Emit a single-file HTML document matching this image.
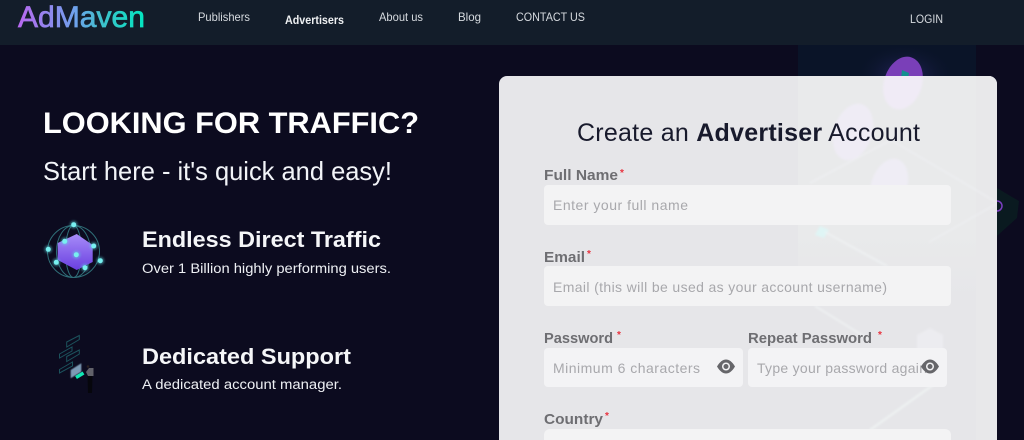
<!DOCTYPE html>
<html><head><meta charset="utf-8"><style>
html,body{margin:0;padding:0;width:1024px;height:440px;overflow:hidden;background:#0c0b1f}
svg{display:block;width:1024px;height:440px;overflow:hidden}
text{font-family:"Liberation Sans",sans-serif}
.nav{font-size:12px;fill:#d6dadf}
.lab{font-size:15px;font-weight:bold;fill:#6e6e72}
.ph{font-size:14px;fill:#a8a8ac}
.st{font-size:10px;fill:#e8333f;font-weight:bold}
</style></head><body>
<svg width="1024" height="440" viewBox="0 0 1024 440" xmlns="http://www.w3.org/2000/svg">
<defs>
<linearGradient id="lg" x1="18" x2="146" y1="0" y2="0" gradientUnits="userSpaceOnUse">
<stop offset="0" stop-color="#b868f0"/><stop offset=".45" stop-color="#6ea2ec"/><stop offset=".65" stop-color="#3fc0cc"/><stop offset="1" stop-color="#00e8c0"/></linearGradient>
<linearGradient id="cube" x1="0" x2="0" y1="0" y2="1"><stop offset="0" stop-color="#a78cf8"/><stop offset="1" stop-color="#6a3fe0"/></linearGradient>
<linearGradient id="fade" x1="0" x2="0" y1="0" y2="1"><stop offset="0" stop-color="#e9eaeb"/><stop offset=".7" stop-color="#e9eaeb"/><stop offset="1" stop-color="#e9eaeb" stop-opacity="0"/></linearGradient>
<filter id="b1"><feGaussianBlur stdDeviation="1"/></filter>
<filter id="b0"><feGaussianBlur stdDeviation=".6"/></filter>
<radialGradient id="glow"><stop offset="0" stop-color="#25255f"/><stop offset="1" stop-color="#0a1428" stop-opacity="0"/></radialGradient>
<clipPath id="cardclip"><path d="M507 76H989a8 8 0 0 1 8 8V440H499V84a8 8 0 0 1 8-8z"/></clipPath>
</defs>
<rect width="1024" height="440" fill="#0c0b1f"/>
<rect x="798" y="45" width="178" height="40" fill="#0a1428"/>
<ellipse cx="905" cy="75" rx="50" ry="32" fill="url(#glow)"/>
<ellipse cx="903" cy="83" rx="19" ry="27" transform="rotate(18 903 83)" fill="#7a3fb8"/>
<path d="M902 70l7 3-1 6h-7z" fill="#128f8f"/>
<path d="M997 188l22 13-2 17-20 18z" fill="#0a1a20"/>
<path d="M997 201a5 5 0 0 1 0 10" fill="none" stroke="#7a3fc0" stroke-width="1.5"/>

<rect width="1024" height="45" fill="#131d2a"/>
<text x="18" y="27" font-size="30" fill="url(#lg)" stroke="url(#lg)" stroke-width=".7" textLength="127" lengthAdjust="spacingAndGlyphs">AdMaven</text>
<text class="nav" x="198" y="21" textLength="52" lengthAdjust="spacingAndGlyphs">Publishers</text>
<text class="nav" x="285" y="24" textLength="59" lengthAdjust="spacingAndGlyphs" style="font-weight:bold;fill:#eef0f2">Advertisers</text>
<text class="nav" x="379" y="21" textLength="44" lengthAdjust="spacingAndGlyphs">About us</text>
<text class="nav" x="458" y="21" textLength="23" lengthAdjust="spacingAndGlyphs">Blog</text>
<text class="nav" x="516" y="21" textLength="69" lengthAdjust="spacingAndGlyphs">CONTACT US</text>
<text class="nav" x="910" y="23" textLength="33" lengthAdjust="spacingAndGlyphs">LOGIN</text>

<text x="43" y="133" font-size="30" font-weight="bold" fill="#fff" textLength="376" lengthAdjust="spacingAndGlyphs">LOOKING FOR TRAFFIC?</text>
<text x="43" y="180" font-size="26" fill="#f2f4f8" textLength="349" lengthAdjust="spacingAndGlyphs">Start here - it's quick and easy!</text>

<g fill="none" stroke="#2f6f78" stroke-width="1">
<circle cx="73.500" cy="251.500" r="26"/>
<ellipse cx="73.500" cy="251.500" rx="17" ry="26"/><ellipse cx="73.500" cy="251.500" rx="8" ry="26"/>
</g>
<path d="M76.700 234L92.700 245V262L76.700 270L57.700 260V243z" fill="url(#cube)"/>
<g fill="#5fd8e0" opacity=".45" filter="url(#b1)"><circle cx="73.700" cy="224.700" r="4"/><circle cx="48.300" cy="249.300" r="4"/><circle cx="64.700" cy="241.300" r="4"/><circle cx="93.700" cy="246" r="4"/><circle cx="76.300" cy="254.700" r="4"/><circle cx="56.300" cy="262.300" r="4"/><circle cx="85" cy="267.700" r="4"/><circle cx="100.300" cy="260.700" r="4"/></g>
<g fill="#78f0f0"><circle cx="73.700" cy="224.700" r="2.500"/><circle cx="48.300" cy="249.300" r="2.500"/><circle cx="64.700" cy="241.300" r="2.500"/><circle cx="93.700" cy="246" r="2.500"/><circle cx="76.300" cy="254.700" r="2.500"/><circle cx="56.300" cy="262.300" r="2.500"/><circle cx="85" cy="267.700" r="2.500"/><circle cx="100.300" cy="260.700" r="2.500"/></g>

<g fill="none" stroke="#1c525c" stroke-width="1">
<path d="M66.700 342L79.300 335.500V339.500L66.700 347z"/>
<path d="M59.500 354L72 347V351L59.500 358z"/>
<path d="M66.700 356.500L79.300 350V354L66.700 361.500z"/>
<path d="M59.500 369.500L72.500 362V366L59.500 373z"/>
</g>
<path d="M70.700 370L81.300 363.300V371.700L70.700 378.300z" fill="#7d9ab4" filter="url(#b0)"/>
<path d="M76 377.500L83.500 373" stroke="#10e8b4" stroke-width="3.500" fill="none"/>
<path d="M87.500 375H92.500L92 393H88z" fill="#06060c"/>
<path d="M86 372L89 368H93.500V376H88z" fill="#62626a"/>
<circle cx="88" cy="366.500" r="1.300" fill="#2a2020"/>

<text x="142" y="247" font-size="22" font-weight="bold" fill="#f5f6f8" textLength="239" lengthAdjust="spacingAndGlyphs">Endless Direct Traffic</text>
<text x="142" y="273" font-size="13.500" fill="#eef0f4" textLength="249" lengthAdjust="spacingAndGlyphs">Over 1 Billion highly performing users.</text>
<text x="142" y="364" font-size="22" font-weight="bold" fill="#f5f6f8" textLength="209" lengthAdjust="spacingAndGlyphs">Dedicated Support</text>
<text x="142" y="389" font-size="13.500" fill="#eef0f4" textLength="200" lengthAdjust="spacingAndGlyphs">A dedicated account manager.</text>

<path d="M507 76H989a8 8 0 0 1 8 8V440H499V84a8 8 0 0 1 8-8z" fill="#e6e6e9"/>
<g clip-path="url(#cardclip)">
<rect x="798" y="76" width="178" height="225" fill="url(#fade)"/>
<rect x="976" y="76" width="21" height="364" fill="#e8e8ea"/>
<g filter="url(#b1)">
<ellipse cx="903" cy="83" rx="19" ry="27" transform="rotate(18 903 83)" fill="#f0ebf6"/>
<ellipse cx="853" cy="132" rx="19" ry="29" transform="rotate(18 853 132)" fill="#efecf5"/>
<ellipse cx="889" cy="186" rx="18" ry="28" transform="rotate(18 889 186)" fill="#efedf5"/>
<path d="M820 226l9 4-5 8-9-3z" fill="#dff5f5"/>
<path d="M930 328l13 7v18l-13 7-13-7v-18z" fill="#ececf0"/>
<path d="M810 183l81-43 107 63-60 34-9 5" fill="none" stroke="#f0f1f4" stroke-width="1"/>
<path d="M825 232l62 34M815 306l55 34" fill="none" stroke="#f0f3f4" stroke-width="1.500"/>
<path d="M870 430l70-50" fill="none" stroke="#eff3f3" stroke-width="2"/>
</g>
</g>

<text x="577" y="141" font-size="25" fill="#181a2c" textLength="343" lengthAdjust="spacing">Create an <tspan font-weight="bold">Advertiser</tspan> Account</text>

<text class="lab" x="544" y="180" textLength="74" lengthAdjust="spacingAndGlyphs">Full Name</text><text class="st" x="620" y="176">*</text>
<rect x="544" y="185" width="407" height="40" rx="4" fill="#f3f3f4"/>
<text class="ph" x="553" y="210" textLength="135" lengthAdjust="spacing">Enter your full name</text>

<text class="lab" x="544" y="262" textLength="41" lengthAdjust="spacingAndGlyphs">Email</text><text class="st" x="587" y="257">*</text>
<rect x="544" y="266" width="407" height="40" rx="4" fill="#f3f3f4"/>
<text class="ph" x="553" y="292" textLength="334" lengthAdjust="spacing">Email (this will be used as your account username)</text>

<text class="lab" x="544" y="343" textLength="69" lengthAdjust="spacingAndGlyphs">Password</text><text class="st" x="617" y="338">*</text>
<rect x="544" y="348" width="199" height="39" rx="4" fill="#f3f3f5"/>
<text class="ph" x="553" y="373" textLength="147" lengthAdjust="spacing">Minimum 6 characters</text>
<path d="M717 366.500c3-5 6-7 9-7s6 2 9 7c-3 5-6 7-9 7s-6-2-9-7z" fill="#66666a"/><circle cx="726" cy="366.500" r="4" fill="#f3f3f5"/><circle cx="726" cy="366.500" r="2.500" fill="#66666a"/>

<text class="lab" x="748" y="343" textLength="124" lengthAdjust="spacingAndGlyphs">Repeat Password</text><text class="st" x="878" y="338">*</text>
<rect x="748" y="348" width="199" height="39" rx="4" fill="#f3f3f5"/>
<text class="ph" x="757" y="373" textLength="170" lengthAdjust="spacing">Type your password again</text>
<path d="M921 366.500c3-5 6-7 9-7s6 2 9 7c-3 5-6 7-9 7s-6-2-9-7z" fill="#66666a"/><circle cx="930" cy="366.500" r="4" fill="#f3f3f5"/><circle cx="930" cy="366.500" r="2.500" fill="#66666a"/>

<text class="lab" x="544" y="424" textLength="59" lengthAdjust="spacingAndGlyphs">Country</text><text class="st" x="605" y="419">*</text>
<path d="M550 429H945a6 6 0 0 1 6 6V440H544V435a6 6 0 0 1 6-6z" fill="#f3f3f4"/>
</svg>
</body></html>
